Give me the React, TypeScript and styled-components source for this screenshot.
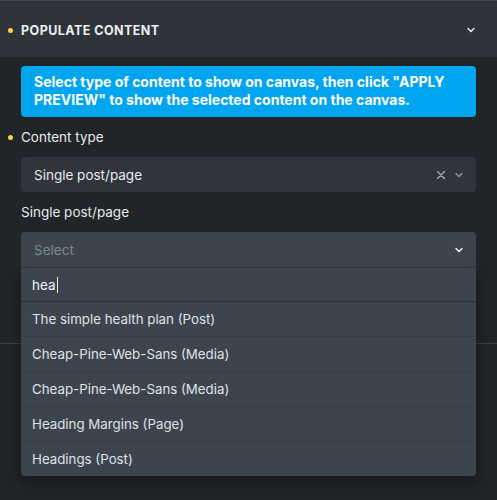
import React from "react";
import styled, { createGlobalStyle } from "styled-components";

const GlobalStyle = createGlobalStyle`
    html, body {
        margin: 0;
        padding: 0;
        background: #212428;
    }
    body {
        font-family: Inter, "Noto Sans", sans-serif;
        -webkit-font-smoothing: antialiased;
    }
`;

const options = [
    "The simple health plan (Post)",
    "Cheap-Pine-Web-Sans (Media)",
    "Cheap-Pine-Web-Sans (Media)",
    "Heading Margins (Page)",
    "Headings (Post)",
];

const Chevron: React.FC<{ color: string }> = ({ color }) => (
    <svg width="10" height="10" viewBox="0 0 10 10">
        <path d="M2 3.5 L5 6.5 L8 3.5" fill="none" stroke={color} strokeWidth="1.5" strokeLinecap="round" strokeLinejoin="round" />
    </svg>
);

const Cross: React.FC = () => (
    <svg width="10" height="10" viewBox="0 0 10 10">
        <path d="M1.5 1.5 L8.5 8.5 M8.5 1.5 L1.5 8.5" fill="none" stroke="#9aa1a9" strokeWidth="1.5" strokeLinecap="round" />
    </svg>
);

const App: React.FC = () => {
    return (
        <Page>
            <GlobalStyle />
            <Header>
                <Title>Populate content</Title>
                <Chevron color="#e6e8ea" />
            </Header>
            <Body>
                <Info>
                    Select type of content to show on canvas, then click "APPLY PREVIEW" to show the selected content on the canvas.
                </Info>
                <Label marked>Content type</Label>
                <Control>
                    <Value>Single post/page</Value>
                    <Icons>
                        <Cross />
                        <Chevron color="#8c939b" />
                    </Icons>
                </Control>
                <Label>Single post/page</Label>
                <SelectWrap>
                    <Control open>
                        <Placeholder>Select</Placeholder>
                        <Icons>
                            <Chevron color="#f0f2f4" />
                        </Icons>
                    </Control>
                    <Menu>
                        <Search>
                            hea<Caret />
                        </Search>
                        {options.map((o, i) => (
                            <Option key={i}>{o}</Option>
                        ))}
                    </Menu>
                </SelectWrap>
            </Body>
            <NextSection />
        </Page>
    );
};

const Page = styled.div`
    width: 497px;
    height: 500px;
    overflow: hidden;
    background: #212428;
`;

const Header = styled.div`
    position: relative;
    display: flex;
    align-items: center;
    justify-content: space-between;
    box-sizing: border-box;
    height: 57px;
    padding: 2px 21px 0 21px;
    background: #2f343b;
    border-top: 1px solid #41464d;
    &::before {
        content: "";
        position: absolute;
        left: 8px;
        top: 27px;
        width: 5px;
        height: 5px;
        border-radius: 50%;
        background: #ffd54a;
    }
`;

const Title = styled.div`
    font-size: 12.5px;
    font-weight: 700;
    letter-spacing: 0.45px;
    text-transform: uppercase;
    color: #eceef0;
`;

const Body = styled.div`
    display: flex;
    flex-direction: column;
    padding: 9px 21px 76px 21px;
`;

const Info = styled.div`
    background: #00a5ef;
    border-radius: 4px;
    padding: 7px 13px 8px 13px;
    color: #ffffff;
    font-size: 14px;
    font-weight: 700;
    line-height: 18px;
`;

const Label = styled.div<{ marked?: boolean }>`
    position: relative;
    height: 40px;
    display: flex;
    align-items: center;
    color: #e8eaec;
    font-size: 13.5px;
    &::before {
        content: "";
        display: ${(p) => (p.marked ? "block" : "none")};
        position: absolute;
        left: -13px;
        top: 18px;
        width: 5px;
        height: 5px;
        border-radius: 50%;
        background: #ffd54a;
    }
`;

const SelectWrap = styled.div`
    position: relative;
`;

const Control = styled.div<{ open?: boolean }>`
    display: flex;
    align-items: center;
    justify-content: space-between;
    height: 35px;
    padding: 0 12px 0 13px;
    border-radius: ${(p) => (p.open ? "4px 4px 0 0" : "4px")};
    background: ${(p) => (p.open ? "#3c454e" : "#30353c")};
`;

const Value = styled.span`
    color: #e8eaec;
    font-size: 13.5px;
`;

const Placeholder = styled.span`
    color: #7d858e;
    font-size: 13.5px;
`;

const Icons = styled.div`
    display: flex;
    align-items: center;
    gap: 8px;
`;

const Menu = styled.div`
    position: absolute;
    top: 35px;
    left: 0;
    right: 0;
    z-index: 2;
    background: #3c454e;
    border-top: 1px solid #2c3238;
    border-radius: 0 0 4px 4px;
    box-shadow: 0 6px 14px rgba(0, 0, 0, 0.35);
`;

const Search = styled.div`
    display: flex;
    align-items: center;
    height: 33px;
    padding: 0 11px;
    color: #f2f4f6;
    font-size: 13.5px;
    border-bottom: 1px solid #2c3238;
`;

const Caret = styled.span`
    display: inline-block;
    width: 1px;
    height: 16px;
    margin-left: 1px;
    background: #e8eaec;
`;

const Option = styled.div`
    display: flex;
    align-items: center;
    box-sizing: border-box;
    height: 34px;
    padding: 0 11px 1px 11px;
    color: #dfe2e5;
    font-size: 13.3px;
    & + & {
        height: 35px;
        border-top: 1px solid #353c43;
    }
`;

const NextSection = styled.div`
    border-top: 1px solid #3a3f46;
    height: 200px;
`;

export default App;
